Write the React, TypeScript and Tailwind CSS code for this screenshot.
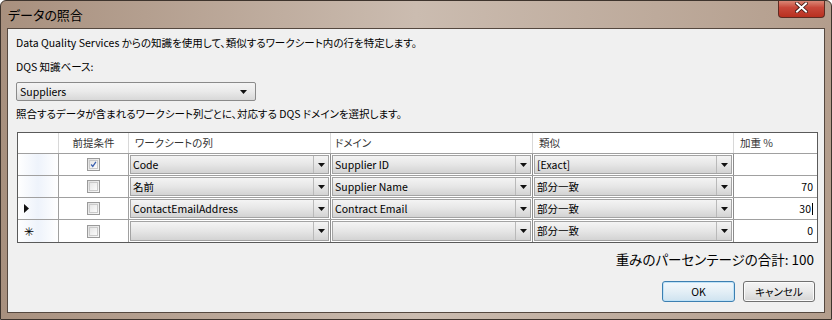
import React from "react";

const JP = "font-['Noto_Sans_CJK_JP',sans-serif] [font-feature-settings:'palt']";

function Arrow() {
  return (
    <svg width="7" height="4" viewBox="0 0 7 4">
      <path d="M0 0h7L3.5 4z" fill="#111" />
    </svg>
  );
}

function Combo({ text }: { text: string }) {
  return (
    <div className="flex h-full border border-[#a3a3a3] bg-gradient-to-b from-[#f4f4f4] via-[#e6e6e6] to-[#d3d3d3]">
      <div className="flex flex-1 items-center overflow-hidden whitespace-nowrap pl-[2px] text-black">
        {text}
      </div>
      <div className="flex w-[15px] items-center justify-center border-l border-[#b9b9b9]">
        <Arrow />
      </div>
    </div>
  );
}

function Check({ checked }: { checked?: boolean }) {
  return (
    <div className="flex h-[13px] w-[13px] items-center justify-center border border-[#9a9a9a] bg-gradient-to-br from-[#e0e0e0] to-[#f8f8f8]">
      <div className="flex h-[9px] w-[9px] items-center justify-center border border-[#cacaca] bg-gradient-to-br from-[#e6e6e6] to-[#fbfbfb]">
        {checked && (
          <svg width="9" height="9" viewBox="0 0 9 9">
            <path d="M1.5 4.5 L3.6 7 L7.6 1.2" stroke="#3a5fae" strokeWidth="1.6" fill="none" />
          </svg>
        )}
      </div>
    </div>
  );
}

type Row = {
  mark: "" | "arrow" | "star";
  checked: boolean;
  col: string;
  domain: string;
  sim: string;
  weight: string;
  caret?: boolean;
};

const rows: Row[] = [
  { mark: "", checked: true, col: "Code", domain: "Supplier ID", sim: "[Exact]", weight: "" },
  { mark: "", checked: false, col: "名前", domain: "Supplier Name", sim: "部分一致", weight: "70" },
  { mark: "arrow", checked: false, col: "ContactEmailAddress", domain: "Contract Email", sim: "部分一致", weight: "30", caret: true },
  { mark: "star", checked: false, col: "", domain: "", sim: "部分一致", weight: "0" },
];

export default function App() {
  return (
    <div
      className={`${JP} relative flex h-[320px] w-[832px] flex-col overflow-hidden rounded-t-[6px] border border-[#3e342d] bg-gradient-to-r from-[#a8907e] via-[#cbbcb0] to-[#b39d8c] px-[6px] pb-[6px] text-black`}
    >
      {/* title bar */}
      <div className="flex h-[27px] shrink-0 items-center justify-between">
        <div className="pl-[1px] text-[13px] leading-none text-black">データの照合</div>
        <div className="flex h-[20px] w-[47px] -translate-y-[3px] items-center justify-center self-start rounded-b-[4px] border border-t-0 border-[#5e2b22] bg-gradient-to-b from-[#e0a090] via-[#c8483a] to-[#b8301f]">
          <svg width="13" height="11" viewBox="0 0 13 11">
            <path d="M2 1.5 L11 9.5 M11 1.5 L2 9.5" stroke="#3a1410" strokeWidth="3.6" strokeLinecap="square" />
            <path d="M2 1.5 L11 9.5 M11 1.5 L2 9.5" stroke="#ffffff" strokeWidth="2" strokeLinecap="square" />
          </svg>
        </div>
      </div>

      {/* client area */}
      <div className="flex flex-1 flex-col border border-[#55483f] bg-[#f0f0f0] pl-[8px] pr-[7px] text-[10.5px]">
        <div className="mt-[8px] h-[12px] leading-[12px]">
          Data Quality Services からの知識を使用して、類似するワークシート内の行を特定します。
        </div>
        <div className="mt-[12px] h-[12px] leading-[12px]">DQS 知識ベース:</div>
        <div className="mt-[9px] flex h-[19px] w-[240px] items-center justify-between rounded-[2px] border border-[#8a8a8a] bg-gradient-to-b from-[#f4f4f4] via-[#eaeaea] to-[#d8d8d8] pl-[3px] pr-[8px]">
          <span>Suppliers</span>
          <Arrow />
        </div>
        <div className="mt-[7px] h-[12px] leading-[12px]">
          照合するデータが含まれるワークシート列ごとに、対応する DQS ドメインを選択します。
        </div>

        {/* grid */}
        <div className="ml-[1px] mt-[12px] w-[801px] border border-[#5a5a5a] bg-white">
          <div className="grid h-[21px] grid-cols-[41px_70px_202px_202px_201px_83px] border-b border-[#a0a0a0] text-[#333]">
            <div className="border-r border-[#d8d8d8]" />
            <div className="flex items-center justify-center border-r border-[#d8d8d8]">前提条件</div>
            <div className="flex items-center border-r border-[#d8d8d8] pl-[6px]">ワークシートの列</div>
            <div className="flex items-center border-r border-[#d8d8d8] pl-[4px]">ドメイン</div>
            <div className="flex items-center border-r border-[#d8d8d8] pl-[6px]">類似</div>
            <div className="flex items-center pl-[6px]">加重 %</div>
          </div>
          {rows.map((r, i) => (
            <div
              key={i}
              className={`grid h-[22px] grid-cols-[41px_70px_202px_202px_201px_83px] ${i < rows.length - 1 ? "border-b border-[#a0a0a0]" : ""}`}
            >
              <div className="flex items-center border-r border-[#a0a0a0] bg-gradient-to-r from-[#ffffff] via-[#eef3fb] to-[#ffffff] pl-[6px]">
                {r.mark === "arrow" && (
                  <svg width="5" height="9" viewBox="0 0 5 9">
                    <path d="M0 0 L5 4.5 L0 9z" fill="#111" />
                  </svg>
                )}
                {r.mark === "star" && <span className="text-[12px] leading-none">✳</span>}
              </div>
              <div className="flex items-center justify-center border-r border-[#a0a0a0]">
                <Check checked={r.checked} />
              </div>
              <div className="border-r border-[#8c8c8c] p-px">
                <Combo text={r.col} />
              </div>
              <div className="border-r border-[#8c8c8c] p-px">
                <Combo text={r.domain} />
              </div>
              <div className="border-r border-[#8c8c8c] p-px">
                <Combo text={r.sim} />
              </div>
              <div className="flex items-center justify-end pr-[4px]">
                {r.weight}
                {r.caret && <span className="ml-px inline-block h-[12px] w-px bg-black" />}
              </div>
            </div>
          ))}
        </div>

        <div className="mt-[8px] flex justify-end pr-[3px] text-[13.5px] leading-[16px]">
          重みのパーセンテージの合計: 100
        </div>

        <div className="mt-[14px] flex justify-end gap-[8px] pr-[2px]">
          <div className="flex h-[21px] w-[73px] items-center justify-center rounded-[3px] border border-[#3c7fb1] bg-gradient-to-b from-[#f2f8fc] via-[#e4eff6] to-[#cfe3f0] shadow-[inset_0_0_0_1px_#bfe2f7]">
            OK
          </div>
          <div className="flex h-[21px] w-[72px] items-center justify-center rounded-[3px] border border-[#707070] bg-gradient-to-b from-[#f4f4f4] via-[#e8e8e8] to-[#d4d4d4] shadow-[inset_0_0_0_1px_#fbfbfb]">
            キャンセル
          </div>
        </div>
      </div>
    </div>
  );
}
